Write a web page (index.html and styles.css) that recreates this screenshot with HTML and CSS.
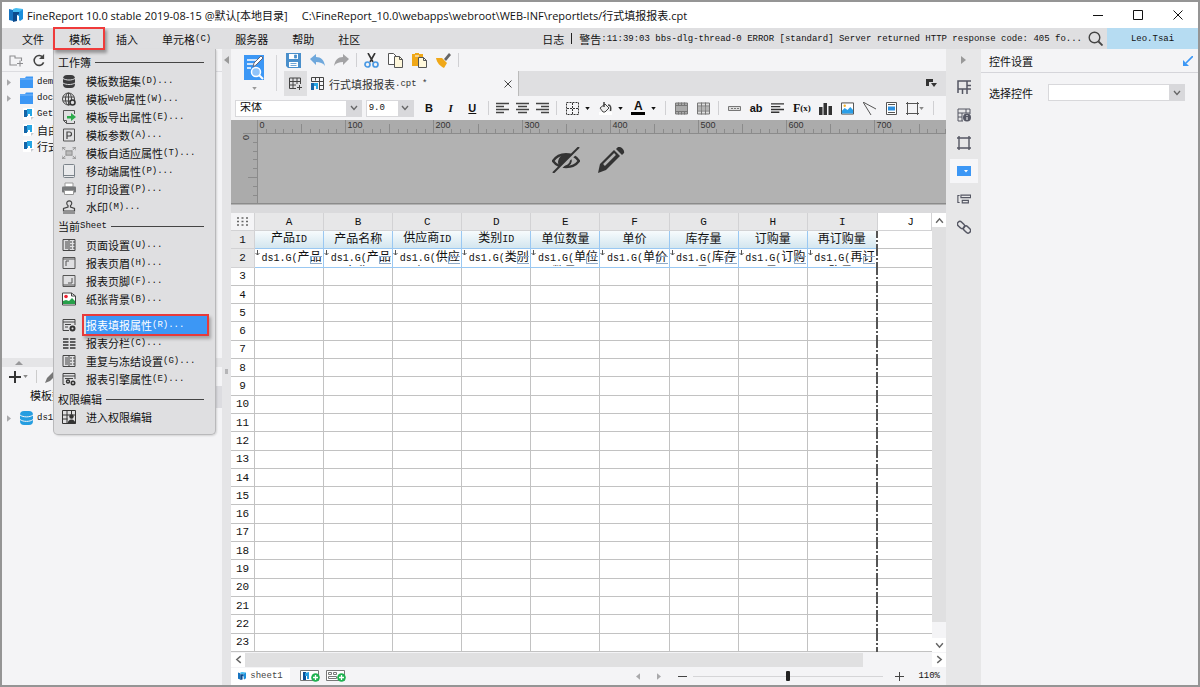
FILE: index.html
```html
<!DOCTYPE html>
<html lang="zh-CN">
<head>
<meta charset="utf-8">
<title>FineReport 10.0</title>
<link rel="stylesheet" href="styles.css">
</head>
<body>
<svg class="defs" aria-hidden="true">
  <symbol id="folder" viewBox="0 0 13 12"><path d="M0 2h5l1-1.500h7V12H0z" fill="#3c97f5"/><path d="M0 3h13" stroke="#7db9f8"/></symbol>
  <symbol id="file" viewBox="0 0 11 12"><path d="M0 0h11v9l-3 3H0z" fill="#fff"/><path d="M1 2h3v7H1z" fill="#1565a8"/><path d="M4 1l5 0v7H7V6H5v2H4z" fill="#25a5e4"/><path d="M8 12V9h3z" fill="#c5c9cf"/></symbol>
  <symbol id="tri" viewBox="0 0 5 8"><path d="M0 0l5 4-5 4z" fill="#a9a9ab"/></symbol>
  <symbol id="caret" viewBox="0 0 6 4"><path d="M0 0h6L3 4z" fill="currentColor"/></symbol>
  <symbol id="chev" viewBox="0 0 8 6"><path d="M1 1l3 3.500L7 1" fill="none" stroke="#666" stroke-width="1.300"/></symbol>
  <symbol id="pageset" viewBox="0 0 14 14"><path d="M1 1.500h12v11H1zM7 1v12" fill="none" stroke="#444"/><path d="M3 4h3M3 6h3M3 8h3M3 10h3M8 4h2M8 7h2M8 10h2M11 4h2M11 7h2M11 10h2" stroke="#444"/></symbol>
  <symbol id="logo" viewBox="0 0 14 14"><path d="M0 1l4 1v11l-4-1z" fill="#1673c0"/><path d="M4 1l3-1 7 1-3 3H4z" fill="#46bdf2"/><path d="M4 4h6v3H8v6l-4 1z" fill="#0c4a8c"/><path d="M10 4l4-3v10l-3 2-1-1V8l-2-1 2-1z" fill="#1b8fdc"/></symbol>
</svg>
<div class="window">
  <header class="titlebar">
    <svg class="applogo"><use href="#logo"/></svg>
    <span>FineReport 10.0 stable 2019-08-15 @默认[本地目录]</span>
    <span class="path">C:\FineReport_10.0\webapps\webroot\WEB-INF\reportlets/行式填报报表.cpt</span>
    <div class="winbtns">
      <button aria-label="最小化"><svg viewBox="0 0 10 10"><path d="M0 5.500h10" stroke="#111"/></svg></button>
      <button aria-label="最大化"><svg viewBox="0 0 10 10"><path d="M.5.500h9v9h-9z" fill="none" stroke="#111"/></svg></button>
      <button aria-label="关闭"><svg viewBox="0 0 10 10"><path d="M.5.500l9 9M9.500.500l-9 9" stroke="#111"/></svg></button>
    </div>
  </header>

  <nav class="menubar">
    <button>文件</button>
    <button class="current">模板</button>
    <button>插入</button>
    <button>单元格<span class="l">(C)</span></button>
    <button>服务器</button>
    <button>帮助</button>
    <button>社区</button>
    <div class="log">日志<i></i>警告<span class="l">:11:39:03 bbs-dlg-thread-0 ERROR [standard] Server returned HTTP response code: 405 fo...</span></div>
    <button class="search" aria-label="搜索"><svg viewBox="0 0 15 15"><circle cx="6.500" cy="6.500" r="5.300" fill="none" stroke="#444" stroke-width="1.400"/><path d="M10.500 10.500l4 4" stroke="#444" stroke-width="1.800"/></svg></button>
    <button class="user l">Leo.Tsai</button>
  </nav>

  <div class="workspace">
    <aside class="left">
      <div class="lefttools">
        <svg viewBox="0 0 14 12"><path d="M8 10.500H1v-9h5v2h6.500v3M11 6v6M8 9h6" fill="none" stroke="#8d8d90" stroke-width="1.100"/></svg>
        <svg viewBox="0 0 14 14"><path d="M11.500 4A5.300 5.300 0 1 0 12 9" fill="none" stroke="#444" stroke-width="1.700"/><path d="M12.500 0v5.500H7z" fill="#444"/></svg>
      </div>
      <ul class="tree">
        <li><svg class="tri"><use href="#tri"/></svg><svg class="fold"><use href="#folder"/></svg><span class="l">dem</span></li>
        <li><svg class="tri"><use href="#tri"/></svg><svg class="fold"><use href="#folder"/></svg><span class="l">doc</span></li>
        <li><svg class="tri"></svg><svg class="file"><use href="#file"/></svg><span class="l">Get</span></li>
        <li><svg class="tri"></svg><svg class="file"><use href="#file"/></svg>自由</li>
        <li><svg class="tri"></svg><svg class="file"><use href="#file"/></svg>行式</li>
      </ul>
      <div class="hsplit"><svg viewBox="0 0 8 4"><path d="M0 4h8L4 0z" fill="#98989a"/></svg></div>
      <div class="dstools">
        <svg class="plus" viewBox="0 0 12 12"><path d="M6 0v12M0 6h12" stroke="#333" stroke-width="2"/></svg><svg class="mini"><use href="#caret"/></svg><i></i>
        <svg class="pen" viewBox="0 0 12 12"><path d="M0 12l2-5 7-7 3 3-7 7z" fill="#777"/></svg>
      </div>
      <div class="dstab">模板数</div>
      <ul class="tree ds"><li><svg class="tri"><use href="#tri"/></svg><svg class="db" viewBox="0 0 13 14"><rect width="13" height="14" rx="4" fill="#259de0"/><path d="M0 4c3 2.500 10 2.500 13 0M0 8.500c3 2.500 10 2.500 13 0" fill="none" stroke="#f4f4f6"/></svg><span class="l">ds1</span></li></ul>

      <div class="dropdown">
        <h3>工作簿</h3>
        <ul>
          <li><svg viewBox="0 0 14 14"><rect x="1" y="1" width="12" height="13" rx="4" fill="#3c3c3e"/><path d="M1 4.500c3 2 9 2 12 0M1 9c3 2 9 2 12 0" fill="none" stroke="#dfdfe1"/></svg>模板数据集<span class="l">(D)...</span></li>
          <li><svg viewBox="0 0 14 14"><g fill="none" stroke="#444"><circle cx="6.500" cy="7" r="6"/><ellipse cx="6.500" cy="7" rx="3" ry="6"/><path d="M1 5h11M1 9h8M6.500 1v12"/></g><circle cx="10.500" cy="10.500" r="2.500" fill="#dfdfe1" stroke="#333" stroke-width="1.600"/></svg>模板<span class="l">Web</span>属性<span class="l">(W)...</span></li>
          <li><svg viewBox="0 0 14 14"><path d="M12.500 4V.500h-11v10l3 3h8V11M1.500 10.500h3v3" fill="none" stroke="#555"/><path d="M5 6h4V3l5 4-5 4V8.500H5z" fill="#2cab4b"/></svg>模板导出属性<span class="l">(E)...</span></li>
          <li><svg viewBox="0 0 14 14"><path d="M1.500 1h11v12h-11z" fill="none" stroke="#555"/><path d="M5 11V4h2.500a2 2 0 0 1 0 4H5" fill="none" stroke="#444" stroke-width="1.200"/></svg>模板参数<span class="l">(A)...</span></li>
          <li><svg viewBox="0 0 16 14"><path d="M4.500 4.500h7v5h-7z" fill="#bbb" stroke="#888"/><path d="M1 1l3 3M15 1l-3 3M1 13l3-3M15 13l-3-3M0 4V1h4M12 1h4v3M0 10v3h4M12 13h4v-3" fill="none" stroke="#888"/></svg>模板自适应属性<span class="l">(T)...</span></li>
          <li><svg viewBox="0 0 14 14"><rect x="1.500" y=".5" width="11" height="13" rx="1" fill="#e9eaec" stroke="#7b838a"/><path d="M2 11.500h10" stroke="#7b838a"/></svg>移动端属性<span class="l">(P)...</span></li>
          <li><svg viewBox="0 0 14 14"><path d="M3 1h8v4H3z" fill="#fff" stroke="#999"/><rect y="4.500" width="14" height="6" rx="1" fill="#77797b"/><path d="M2.500 8.500h9v4h-9z" fill="#fff" stroke="#999"/></svg>打印设置<span class="l">(P)...</span></li>
          <li><svg viewBox="0 0 14 14"><path d="M6 7V5.500a2.500 2.500 0 1 1 2.500 0V7l4 1.500V11H1.500V8.500zM1 13h12" fill="none" stroke="#444" stroke-width="1.200"/></svg>水印<span class="l">(M)...</span></li>
        </ul>
        <h3>当前<span class="l">Sheet</span></h3>
        <ul>
          <li><svg><use href="#pageset"/></svg>页面设置<span class="l">(U)...</span></li>
          <li><svg viewBox="0 0 14 14"><path d="M1 1.500h12v11H1z" fill="none" stroke="#555"/><path d="M4 10V5h3M1 3h12" fill="none" stroke="#555"/></svg>报表页眉<span class="l">(H)...</span></li>
          <li><svg viewBox="0 0 14 14"><path d="M1 1.500h12v11H1z" fill="none" stroke="#555"/><path d="M10 4v5H6M1 11h12" fill="none" stroke="#555"/></svg>报表页脚<span class="l">(F)...</span></li>
          <li><svg viewBox="0 0 14 14"><path d="M.5 1h9l4 3v9H.5z" fill="#fff" stroke="#444"/><circle cx="4" cy="4.500" r="1.800" fill="#e23"/><path d="M1 12V9l3-1 3 1 3-3 3 3v3z" fill="#26a04a"/><path d="M9.500 1v3h4" fill="none" stroke="#444"/></svg>纸张背景<span class="l">(B)...</span></li>
        </ul>
        <hr>
        <ul class="tight">
          <li class="picked"><svg viewBox="0 0 14 14"><path d="M1 12.500V1.500h12V7M1 4h12M1 12.500h6M3 6.500h6M3 9h3" fill="none" stroke="#444"/><circle cx="10.500" cy="10.500" r="2" fill="none" stroke="#333" stroke-width="2"/></svg><b>报表填报属性<span class="l">(R)...</span></b></li>
          <li><svg viewBox="0 0 14 14"><path d="M1 3h5.500M1 6h5.500M1 9h5.500M1 12h5.500M8 3h5.500M8 6h5.500M8 9h5.500M8 12h5.500" stroke="#333" stroke-width="1.600"/></svg>报表分栏<span class="l">(C)...</span></li>
          <li><svg><use href="#pageset"/></svg>重复与冻结设置<span class="l">(G)...</span></li>
          <li><svg viewBox="0 0 14 14"><path d="M1 12.500V1.500h12V7M1 4h12M3 6.500h8M1 12.500h2" fill="none" stroke="#444"/><circle cx="6" cy="9.500" r="1.500" fill="none" stroke="#333" stroke-width="1.400"/><circle cx="11" cy="11" r="1.700" fill="none" stroke="#333" stroke-width="1.600"/></svg>报表引擎属性<span class="l">(E)...</span></li>
        </ul>
        <h3>权限编辑</h3>
        <ul class="tight"><li><svg viewBox="0 0 14 14"><path d="M.5.500h13v13H.5zM.5 5h13M.5 9h5M5 .5v13M9.500.500v4" fill="none" stroke="#333"/><circle cx="9.500" cy="6.500" r="2.200" fill="#333"/><path d="M5.500 14c0-6 8-6 8 0z" fill="#333"/></svg>进入权限编辑</li></ul>
      </div>
    </aside>
    <div class="vsplit"><svg viewBox="0 0 5 8"><path d="M5 0v8L0 4z" fill="#999"/></svg><i></i></div>

    <main class="center">
      <div class="top">
        <button class="big" aria-label="模板预览"><svg viewBox="0 0 20 25"><path d="M0 0h20v25H0z" fill="#3c97f5"/><path d="M3 5h10M3 9h7M3 13h4" stroke="#fff" stroke-width="1.500"/><path d="M9 12l1-4 7-7 2 2-7 7z" fill="#fff" stroke="#667"/><circle cx="12" cy="17" r="4.500" fill="#8fc3fa" stroke="#fff" stroke-width="1.500"/><path d="M15 20l4 4" stroke="#fff" stroke-width="2"/></svg><svg class="mini"><use href="#caret"/></svg></button>
        <div class="topright">
          <div class="tools">
            <button aria-label="保存"><svg viewBox="0 0 15 15"><path d="M0 0h15v15H2l-2-2z" fill="#4a8fcb"/><path d="M3 1h9v5H3zM3 9h9v5H3z" fill="#fff"/><path d="M8.500 2h2v3h-2zM4.500 10.500h6M4.500 12.500h6" fill="#4a8fcb" stroke="#4a8fcb" stroke-width=".8"/></svg></button>
            <button aria-label="撤销"><svg viewBox="0 0 15 15"><path d="M0 6l6-5v3c5 0 8 3 9 9-2-3-5-4-9-4v3z" fill="#6fa8dc"/></svg></button>
            <button aria-label="重做"><svg viewBox="0 0 15 15"><path d="M15 6L9 1v3c-5 0-8 3-9 9 2-3 5-4 9-4v3z" fill="#a3a3a5"/></svg></button>
            <i></i>
            <button aria-label="剪切"><svg viewBox="0 0 15 15"><path d="M4 0l5 9M11 0L6 9" stroke="#333" stroke-width="1.600"/><circle cx="3.500" cy="11.500" r="2.500" fill="none" stroke="#4b9ae4" stroke-width="1.700"/><circle cx="11.500" cy="11.500" r="2.500" fill="none" stroke="#4b9ae4" stroke-width="1.700"/></svg></button>
            <button aria-label="复制"><svg viewBox="0 0 15 15"><path d="M.5.500h5l3 3v8h-8z" fill="#fff" stroke="#555"/><path d="M6.500 3.500h5l3 3v8h-8z" fill="#fff8dc" stroke="#555"/><path d="M11.500 3.500v3h3" fill="none" stroke="#555"/></svg></button>
            <button aria-label="粘贴"><svg viewBox="0 0 15 15"><path d="M0 1h3V0h4v1h4v12H0z" fill="#f0a818"/><path d="M3 3h4" stroke="#fff"/><path d="M6.500 4.500h5l3 3v7h-8z" fill="#fff8dc" stroke="#555"/><path d="M11.500 4.500v3h3" fill="none" stroke="#555"/></svg></button>
            <button aria-label="格式刷"><svg viewBox="0 0 15 15"><path d="M8 6l5-6 2 2-5 6z" fill="#666"/><path d="M0 5l6 0 5 5-3 5c-4-2-7-5-8-10z" fill="#f0a818"/></svg></button>
            <i></i>
          </div>
          <div class="tabs">
            <button class="newtab" aria-label="新建"><svg viewBox="0 0 13 13"><path d="M.5 1h11v6M.5 1v10.500H7M.5 4.500h11M.5 8H7M4 1v10.500M8 1v6M10.500 8v5M8 10.500h5" fill="none" stroke="#444"/></svg></button>
            <div class="tab"><svg viewBox="0 0 13 13"><path d="M.5.500h12v12H8M.5.500v4M.5 4.500h12M4.500.500v3M8.500.500v12M8 8.500h4.500" fill="none" stroke="#444"/><path d="M0 6h3v7H0z" fill="#1565a8"/><path d="M3 6h4v6H5v-3H3z" fill="#25a5e4"/></svg>行式填报报表<span class="l">.cpt *</span><button aria-label="关闭"><svg viewBox="0 0 8 8"><path d="M.5.500l7 7M7.500.500l-7 7" stroke="#444"/></svg></button></div>
            <svg class="tablist" viewBox="0 0 11 9"><path d="M0 0h7v3H3v4H0z" fill="#333"/><path d="M5 4h6L8 8z" fill="#333"/></svg>
          </div>
        </div>
      </div>
      <div class="format">
        <label class="sel font"><select aria-label="字体"><option>宋体</option></select><span><svg><use href="#chev"/></svg></span></label>
        <label class="sel size"><select class="l" aria-label="字号"><option>9.0</option></select><span><svg><use href="#chev"/></svg></span></label>
        <button class="b">B</button><button class="b it">I</button><button class="b un">U</button><i></i>
        <button class="al" aria-label="左对齐"><svg viewBox="0 0 13 13"><path d="M0 1.500h13M0 4.500h8M0 7.500h13M0 10.500h8" stroke="#444" stroke-width="1.300"/></svg></button>
        <button class="al" aria-label="居中"><svg viewBox="0 0 13 13"><path d="M0 1.500h13M2 4.500h9M0 7.500h13M2 10.500h9" stroke="#444" stroke-width="1.300"/></svg></button>
        <button class="al" aria-label="右对齐"><svg viewBox="0 0 13 13"><path d="M0 1.500h13M5 4.500h8M0 7.500h13M5 10.500h8" stroke="#444" stroke-width="1.300"/></svg></button><i></i>
        <button class="wide" aria-label="边框"><svg viewBox="0 0 13 13"><path d="M.5.500h12v12H.5zM6.500 1v12M1 6.500h12" fill="none" stroke="#333" stroke-dasharray="2 1"/></svg><svg class="mini"><use href="#caret"/></svg></button>
        <button class="wide" aria-label="填充"><svg viewBox="0 0 13 13"><path d="M0 10h13v3H0z" fill="#fff"/><path d="M1 6l5-4 4 4-4 4H4z" fill="#eee" stroke="#444"/><path d="M5 5V0M9 3c3 0 3 3 2.500 6" fill="none" stroke="#444" stroke-width="1.500"/></svg><svg class="mini"><use href="#caret"/></svg></button>
        <button class="wide color" aria-label="字体颜色"><span>A</span><svg class="mini"><use href="#caret"/></svg></button><i></i>
        <button aria-label="合并"><svg viewBox="0 0 13 12"><path d="M.5.500h12v11H.5zM0 3h13M0 9h13M3.500 0v3M6.500 0v3M9.500 0v3M3.500 9v3M6.500 9v3M9.500 9v3" fill="#aaa" stroke="#777"/></svg></button>
        <button aria-label="取消合并"><svg viewBox="0 0 13 12"><path d="M.5.500h12v11H.5z" fill="#ddd" stroke="#777"/><path d="M0 3.500h13M0 8.500h13M4.500 0v12M8.500 0v12" stroke="#777"/><path d="M1 4h11v4H1z" fill="#999" opacity=".6"/></svg></button><i></i>
        <button aria-label="控件"><svg viewBox="0 0 13 12"><path d="M.5 4h12v4H.5z" fill="#ddd" stroke="#777"/><path d="M3 6h2M6 6h2M9 6h2" stroke="#777"/></svg></button>
        <button class="ab">ab</button>
        <button aria-label="富文本"><svg viewBox="0 0 14 13"><path d="M0 1.500h14M0 4.500h10M0 7.500h14M0 10.500h9" stroke="#333" stroke-width="1.500"/></svg></button>
        <button class="fx">F<small>(x)</small></button>
        <button aria-label="图表"><svg viewBox="0 0 13 13"><path d="M0 5h3.500v8H0zM4.500 1H8v12H4.500zM9.500 4H13v9H9.500z" fill="#333"/></svg></button>
        <button aria-label="图片"><svg viewBox="0 0 14 13"><path d="M.5.500h13v12H.5z" fill="#fff" stroke="#444"/><path d="M1 9l3-3 3 2 3-3 3 3v4H1z" fill="#2b9fe8"/><circle cx="4" cy="3.500" r="1.300" fill="#f4b32c"/></svg></button>
        <button aria-label="斜线"><svg viewBox="0 0 13 13"><path d="M0 0l13 7M0 0l8 13" stroke="#555" fill="none"/></svg></button>
        <button aria-label="子报表"><svg viewBox="0 0 11 13"><path d="M.5.500h10v12H.5z" fill="#fff" stroke="#555"/><path d="M2 2.500h7M2 10.500h7" stroke="#555"/><path d="M2 4.500h7v4H2z" fill="#2b8fe0"/></svg></button>
        <button class="wide" aria-label="悬浮元素"><svg viewBox="0 0 13 13"><path d="M1.500 0v13M11.500 0v13M0 1.500h13M0 11.500h13" stroke="#555"/></svg><svg class="mini grey"><use href="#caret"/></svg></button><i></i>
      </div>

      <div class="canvas">
        <svg class="ruler" id="ruler" aria-hidden="true"></svg>
        <div class="overlaytools">
          <svg viewBox="0 0 28 26"><path d="M1 14C7 5 21 5 27 14 21 22 7 22 1 14z" fill="none" stroke="#333" stroke-width="2.400"/><path d="M6 15c1-6 5-9 13-8L9 20c-2-1-3-3-3-5z" fill="#333"/><path d="M18 11c2 4 0 7-5 9" fill="none" stroke="#333" stroke-width="2"/><path d="M28 2L3 26" stroke="#b2b2b2" stroke-width="3"/><path d="M27 0L1 26" stroke="#333" stroke-width="2"/></svg>
          <svg viewBox="0 0 26 26"><path d="M0 26l2-9L16 3l6 6L8 23z" fill="#333"/><path d="M6 18L17 7" stroke="#b2b2b2" stroke-width="2.500"/><path d="M18 2l2-2c3-1 7 3 6 6l-2 2z" fill="#333"/></svg>
        </div>
      </div>

      <div class="sheet">
        <table>
          <colgroup><col class="num"><col span="9"><col class="last"></colgroup>
          <thead><tr><th><svg viewBox="0 0 11 9"><path d="M0 1h11M0 4.500h11M0 8h11" stroke="#666" stroke-width="1.500" stroke-dasharray="2 2.500"/></svg></th><th>A</th><th>B</th><th>C</th><th>D</th><th>E</th><th>F</th><th>G</th><th>H</th><th>I</th><th>J</th></tr></thead>
          <tbody id="rows">
            <tr class="names"><th>1</th><td>产品<span>ID</span></td><td>产品名称</td><td>供应商<span>ID</span></td><td>类别<span>ID</span></td><td>单位数量</td><td>单价</td><td>库存量</td><td>订购量</td><td>再订购量</td><td></td></tr>
          </tbody>
        </table>
        <div class="vscroll"><button aria-label="上"><svg class="up"><use href="#chev"/></svg></button><div class="track"><div class="thumb"></div></div><button aria-label="下"><svg><use href="#chev"/></svg></button></div>
      </div>
      <div class="hscroll"><button aria-label="左"><svg class="lt"><use href="#chev"/></svg></button><div class="track"><div class="thumb"></div></div><button aria-label="右"><svg class="rt"><use href="#chev"/></svg></button></div>
      <footer class="bottom">
        <button class="sheettab l"><svg><use href="#logo"/></svg>sheet1</button>
        <button class="add" aria-label="新增sheet"><svg viewBox="0 0 20 12"><path d="M.5.500h18v10H.5z" fill="#fff" stroke="#777"/><path d="M3 2h3v8H3z" fill="#0b4f96"/><path d="M5 3l4-1v7H7V6H5z" fill="#259de0"/><circle cx="15.500" cy="7.500" r="4.300" fill="#1fb250"/><path d="M15.500 5v5M13 7.500h5" stroke="#fff" stroke-width="1.300"/></svg></button>
        <button class="add" aria-label="新增聚合块"><svg viewBox="0 0 20 12"><path d="M.5.500h18v10H.5z" fill="#fff" stroke="#777"/><path d="M2.500 2.500h3v2h-3zM7.500 2.500h3v2h-3zM2.500 6.500h8v2h-8z" fill="none" stroke="#777"/><circle cx="15.500" cy="7.500" r="4.300" fill="#1fb250"/><path d="M15.500 5v5M13 7.500h5" stroke="#fff" stroke-width="1.300"/></svg></button>
        <div class="zoom">
          <svg class="nav flip"><use href="#tri"/></svg><svg class="nav"><use href="#tri"/></svg>
          <button aria-label="缩小"><svg viewBox="0 0 9 9"><path d="M0 4.500h9" stroke="#444"/></svg></button>
          <input type="range" min="0" max="100" value="50" aria-label="缩放">
          <button aria-label="放大"><svg viewBox="0 0 9 9"><path d="M0 4.500h9M4.500 0v9" stroke="#444"/></svg></button>
          <span class="l">110%</span>
        </div>
      </footer>
    </main>

    <div class="strip">
      <svg class="fold" viewBox="0 0 5 8"><path d="M0 0l5 4-5 4z" fill="#999"/></svg>
      <button aria-label="单元格元素"><svg viewBox="0 0 14 14"><path d="M1 13V1h13M1 9h9M10 1v13M5.500 9v5M10 5.500h4M10 9h4" fill="none" stroke="#555763" stroke-width="1.500"/></svg></button>
      <button aria-label="单元格属性"><svg viewBox="0 0 14 14"><path d="M1 1h12v5M1 1v12h5M1 5h12M1 9h4M5 5v8M9 1v4" fill="none" stroke="#555763"/><circle cx="10" cy="9.500" r="4" fill="#555763"/><path d="M10 7v1M10 9v3" stroke="#fff"/></svg></button>
      <button aria-label="悬浮元素"><svg viewBox="0 0 14 14"><path d="M2 0v14M12 0v14M0 2h14M0 12h14" stroke="#555763" stroke-width="1.400"/></svg></button>
      <button class="on" aria-label="控件设置"><svg viewBox="0 0 14 14"><path d="M0 2h14v10H0z" fill="#3c97f5"/><path d="M7 6h4L9 8.500z" fill="#fff"/></svg></button>
      <button aria-label="条件属性"><svg viewBox="0 0 16 14"><path d="M3 3H1v8h2M4.500 2.500h11v3h-11zM6 8.500h7v3H6z" fill="none" stroke="#555763" stroke-width="1.300"/></svg></button>
      <button aria-label="超级链接"><svg viewBox="0 0 14 14"><g fill="none" stroke="#555763" stroke-width="1.500"><rect x="0" y="2.500" width="8" height="5" rx="2.500" transform="rotate(45 4 5)"/><rect x="6" y="7" width="8" height="5" rx="2.500" transform="rotate(45 10 9.500)"/></g></svg></button>
    </div>
    <aside class="panel">
      <h2>控件设置<svg viewBox="0 0 10 10"><path d="M10 0L3 7" stroke="#3c97f5" stroke-width="1.700"/><path d="M0 4v6h6z" fill="#3c97f5"/></svg></h2>
      <div class="field"><label for="ctl">选择控件</label><div class="sel"><select id="ctl"><option></option></select><span><svg><use href="#chev"/></svg></span></div></div>
    </aside>
  </div>
</div>
<script src="main.js"></script>
</body>
</html>
```
FILE: main.js
```js
const fields = [["产品", "ID)"], ["产品", "名称)"], ["供应", "商ID)"], ["类别", "ID)"], ["单位", "数量)"], ["单价", ")"], ["库存", "量)"], ["订购", "量)"], ["再订", "购量)"]];
const rows = document.getElementById("rows");
const arrow = '<svg class="arr" viewBox="0 0 5 6"><path d="M2.500 0v5M.5 3l2 2 2-2" fill="none" stroke="#555"/></svg>';

let html = '<tr class="data"><th>2</th>' + fields.map(([a, b]) =>
  `<td><div class="expr">${arrow}<span>ds1.G(</span>${a}<br>${b}<em></em></div></td>`).join("") + "<td></td></tr>";
for (let r = 3; r <= 23; r++) html += `<tr><th>${r}</th>${"<td></td>".repeat(10)}</tr>`;
rows.insertAdjacentHTML("beforeend", html);

// Horizontal ruler along the top, vertical ruler down the left side
const step = 8.82, x0 = 26;
let marks = '<rect width="100%" height="14" fill="#ababab"/><rect x="0" width="26" height="84" fill="#ababab"/>';
for (let i = 0; i < 79; i++) {
  const x = Math.round(x0 + i * step) + 0.5;
  const h = i % 10 === 0 ? 13 : i % 5 === 0 ? 9 : 4;
  marks += `<path d="M${x} 13v-${h}" stroke="#8b8b8b"/>`;
  if (i % 10 === 0) marks += `<text x="${x + 2}" y="8">${i * 10}</text>`;
}
for (let i = 1; i < 8; i++) {
  const y = Math.round(13 + i * step) + 0.5;
  marks += `<path d="M26 ${y}h-${i % 5 === 0 ? 9 : 4}" stroke="#8b8b8b"/>`;
}
marks += '<text transform="translate(18 20) rotate(-90)">0</text><path d="M12 13.500h1200M26.500 0v84M0 83.500h1200" stroke="#8b8b8b" fill="none"/>';
document.getElementById("ruler").innerHTML = marks;
```
FILE: styles.css
```css
* { box-sizing: border-box; }
body { margin: 0; font: 11px "Liberation Mono", "Noto Sans CJK SC", monospace; color: #111; overflow: hidden; }
button { border: 0; padding: 0; margin: 0; background: none; font: inherit; color: inherit; display: flex; align-items: center; justify-content: center; flex: none; }
ul { list-style: none; margin: 0; padding: 0; }
svg { display: block; flex: none; }
.defs { position: absolute; width: 0; height: 0; }
.l { font-size: 9px; }
.window { height: 100vh; display: flex; flex-direction: column; border: 2px solid #959595; background: #f4f4f6; }

.titlebar { height: 26px; flex: none; background: #fff; display: flex; align-items: center; padding-left: 7px; font: 11px "Open Sans", "Noto Sans CJK SC", sans-serif; white-space: nowrap; }
.applogo { width: 14px; height: 14px; margin-right: 4px; }
.path { margin-left: 14px; }
.winbtns { margin-left: auto; display: flex; }
.winbtns button { width: 40px; height: 26px; }
.winbtns svg { width: 10px; height: 10px; }

.menubar { height: 21px; flex: none; display: flex; background: #dfdfe1; white-space: nowrap; position: relative; }
.menubar button { height: 21px; padding: 0 12px; }
.menubar button:first-child { padding-left: 20px; }
.menubar .current { position: relative; width: 48px; }
.menubar .current::after { content: ""; position: absolute; z-index: 5; inset: -1px -1px -1px -3px; border: 2px solid #ef3b3b; box-shadow: 2px 3px 3px #0005; }
.log { margin-left: auto; display: flex; align-items: center; }
.log i { width: 1px; height: 11px; background: #222; margin: 0 7px; }
.menubar .search { padding: 0 4px 0 6px; }
.search svg { width: 15px; height: 15px; }
.menubar .user { width: 91px; background: #b6dcf2; }

.workspace { flex: 1; min-height: 0; display: flex; }
.left { width: 220px; flex: none; position: relative; display: flex; flex-direction: column; white-space: nowrap; }
.lefttools { height: 23px; display: flex; align-items: center; gap: 9px; padding-left: 7px; border-bottom: 1px solid #dcdce0; }
.lefttools svg { width: 14px; height: 13px; }
.tree { padding-top: 2px; flex: 1; }
.tree li { height: 16px; display: flex; align-items: center; padding-left: 5px; }
.tree .tri { width: 4px; height: 7px; margin-right: 9px; }
.tree .fold, .tree .db { width: 13px; height: 12px; margin-right: 4px; }
.tree .db { height: 14px; }
.tree .file { width: 11px; height: 12px; margin: 0 3px; }
.hsplit { height: 9px; background: #e5e5e7; padding: 3px 0 0 13px; }
.hsplit svg { width: 8px; height: 4px; }
.dstools { height: 19px; display: flex; align-items: center; padding-left: 7px; gap: 2px; color: #888; }
.plus, .pen { width: 12px; height: 12px; }
.dstools i { width: 1px; height: 13px; background: #ccc; margin: 0 6px; }
.mini { width: 5px; height: 3px; }
.dstab { height: 22px; background: linear-gradient(90deg, #f4f4f6 60px, #dcdce0 60px); padding-left: 28px; line-height: 22px; }
.tree.ds { flex: 0 0 277px; }

.dropdown { position: absolute; z-index: 3; left: 51px; top: 0; width: 163px; padding: 4px 0 8px; background: #dfdfe1; border: 1px solid #b9b9bb; border-top: 0; border-radius: 0 0 5px 5px; box-shadow: 1px 1px 2px #0002; }
.dropdown h3 { margin: 0 11px 0 4px; height: 18px; font: inherit; display: flex; align-items: center; }
.dropdown h3::after { content: ""; flex: 1; height: 1px; background: #444; margin-left: 4px; }
.dropdown ul { padding: 1px 0; }
.dropdown .tight { padding: 0 0 2px; }
.dropdown .tight:last-child { padding: 0; }
.dropdown li { height: 18px; display: flex; align-items: center; padding-left: 8px; }
.dropdown li svg { width: 14px; height: 14px; margin-right: 10px; }
.dropdown hr { height: 6px; margin: 0 12px 1px 28px; border: 0; border-bottom: 1px dotted #888; }
.picked b { font-weight: 400; color: #fff; background: #3c97f5; align-self: stretch; width: 121px; display: flex; align-items: center; position: relative; }
.picked b::after { content: ""; position: absolute; inset: -2px -2px -2px -4px; border: 2px solid #e83a3a; box-shadow: 2px 3px 3px #0004; }

.vsplit { width: 9px; flex: none; background: #e5e5e7; display: flex; flex-direction: column; align-items: center; padding-top: 7px; }
.vsplit svg { width: 5px; height: 8px; }
.vsplit i { width: 3px; height: 5px; background: #b5b5b7; margin-top: 305px; }

.center { flex: 1; min-width: 0; display: flex; flex-direction: column; }
.top { display: flex; height: 47px; flex: none; }
.big { width: 46px; flex-direction: column; gap: 7px; color: #999; position: relative; }
.big::after { content: ""; position: absolute; right: 0; top: 6px; width: 1px; height: 36px; background: #d5d5d8; }
.big svg:first-child { width: 20px; height: 25px; }
.topright { flex: 1; margin-left: 7px; }
.tools { height: 22px; display: flex; align-items: center; gap: 9px; padding-left: 2px; }
.tools svg { width: 15px; height: 15px; }
.tools i, .format i { width: 1px; height: 14px; background: #d0d0d3; }
.tools i { margin: 0 -2px; }
.tabs { height: 25px; background: #dfdfe1; display: flex; align-items: center; }
.newtab { width: 23px; height: 25px; }
.tabs svg { width: 13px; height: 13px; }
.tab { width: 212px; height: 25px; background: #f4f4f6; display: flex; align-items: center; padding: 0 6px 0 4px; border-right: 1px solid #bbb; color: #333; }
.tab > svg { margin-right: 5px; }
.tab button { margin-left: auto; }
.tab button svg { width: 8px; height: 8px; }
.tabs .tablist { width: 11px; height: 9px; margin: 0 9px 0 auto; }

.format { height: 24px; flex: none; display: flex; align-items: center; justify-content: space-between; padding: 0 12px 0 4px; }
.sel { display: flex; height: 17px; border: 1px solid #d8d8db; background: #fff; }
.sel select { appearance: none; border: 0; background: #fff; flex: 1; min-width: 0; padding: 0 4px; font-family: inherit; font-size: 11px; color: inherit; outline: 0; }
.sel select.l { font-size: 9px; padding: 0 2px; }
.sel span { width: 15px; background: #d8d8db; display: flex; align-items: center; justify-content: center; }
.sel svg { width: 8px; height: 6px; }
.font { width: 127px; margin-right: -5px; }
.size { width: 48px; }
.format svg { width: 13px; height: 13px; }
.format svg.mini { width: 5px; height: 3px; }
.format .sel svg { width: 8px; height: 6px; }
.wide { gap: 6px; }
.wide .grey { color: #888; margin-left: -6px; }
.al { margin: 0 -1px; }
.b { width: 13px; font: 700 11px "Liberation Sans", sans-serif; }
.it { font-family: "Liberation Serif", serif; font-style: italic; }
.un { text-decoration: underline; }
.color span { font: 700 12px/11px "Liberation Sans", sans-serif; width: 14px; border-bottom: 3px solid #000; }
.ab { font: 700 11px "Liberation Sans", sans-serif; }
.fx { font: 700 12px "Liberation Serif", serif; }
.fx small { font-size: 9px; }

.canvas { height: 85px; flex: none; background: #b2b2b2; position: relative; display: flex; justify-content: center; }
.ruler { position: absolute; inset: 0; width: 100%; height: 84px; }
.ruler text { font: 9px "Liberation Sans", sans-serif; fill: #333; }
.overlaytools { display: flex; gap: 17px; padding-top: 27px; position: relative; }
.overlaytools svg { width: 28px; height: 26px; }

.sheet { flex: 1; min-height: 0; display: flex; border-top: 8px solid #dadadc; background: #fff; }
table { flex: 1; height: 100%; min-width: 0; table-layout: fixed; border-collapse: separate; border-spacing: 0; }
tr { height: 18px; }
.num { width: 24px; }
.last { width: 54px; }
th, td { padding: 0; border: solid #c2c2c2; border-width: 0 1px 1px 0; font-weight: 400; text-align: center; line-height: 16px; overflow: hidden; white-space: nowrap; }
th { font-size: 11px; }
thead th, tbody tr:nth-child(-n+2) th { background: #e7e7e8; border-color: #d2d2d4; }
thead th:last-child { background: #fff; padding-left: 12px; }
thead th:first-child { background: #f4f4f6; }
thead svg { width: 11px; height: 9px; margin: auto; }
td { font-size: 12px; }
td span { font-size: 10px; }
.names td:not(:last-child) { background: linear-gradient(#f7fbfd, #d3e6ef); border-color: #9ac8f2; }
.data td { vertical-align: top; }
.data td:not(:last-child) { border-color: #9ac8f2; }
tbody td:nth-child(10) { border-right: 2px solid; border-image: repeating-linear-gradient(#555 0 7px, #fff 7px 9px, #555 9px 11px, #fff 11px 13px) 0 2 0 0; border-bottom: 0; box-shadow: inset 0 -1px #c2c2c2; }
tbody tr:nth-child(-n+2) td:nth-child(10) { box-shadow: inset 0 -1px #9ac8f2; }
tbody td:last-child { border-right: 0; }
.expr { position: relative; height: 17px; line-height: 14px; padding: 2px 0 0 5px; overflow: hidden; }
.arr { position: absolute; left: 0; top: 1px; width: 5px; height: 6px; }
.expr em { position: absolute; right: 1px; bottom: 2px; width: 12px; height: 8px; border: 1px solid #8fabc9; border-right: 0; }

.vscroll { width: 14px; flex: none; display: flex; flex-direction: column; background: #f4f4f6; }
.vscroll button, .hscroll button { width: 14px; height: 14px; background: #fff; }
.vscroll svg, .hscroll svg { width: 9px; height: 7px; }
.up { transform: rotate(180deg); }
.lt { transform: rotate(90deg); }
.rt { transform: rotate(-90deg); }
.track { flex: 1; min-height: 0; }
.thumb { background: #e0e0e1; }
.vscroll .thumb { height: 96%; }
.hscroll { height: 15px; flex: none; display: flex; align-items: center; }
.hscroll .thumb { width: 90%; height: 14px; }

.bottom { height: 18px; flex: none; display: flex; align-items: center; }
.sheettab { width: 59px; height: 17px; background: #fff; gap: 4px; color: #444; margin-right: 10px; }
.sheettab svg { width: 8px; height: 8px; }
.add { margin-right: 6px; }
.add svg { width: 20px; height: 12px; }
.zoom { margin-left: auto; display: flex; align-items: center; padding-right: 6px; }
.nav { width: 4px; height: 7px; margin-right: 17px; }
.flip { transform: scaleX(-1); }
.zoom button svg { width: 9px; height: 9px; }
.zoom input { appearance: none; width: 190px; height: 12px; margin: 0 12px 0 6px; background: linear-gradient(#d5d5d7, #d5d5d7) center / 100% 1px no-repeat; }
.zoom input::-webkit-slider-thumb { appearance: none; width: 4px; height: 10px; border-radius: 1px; background: #222; }
.zoom span { margin-left: 14px; }

.strip { width: 35px; flex: none; background: #e7e7e8; display: flex; flex-direction: column; align-items: center; }
.strip .fold { width: 5px; height: 8px; margin: 7px 0 11px; }
.strip button { width: 28px; height: 24px; margin-bottom: 4px; }
.strip button svg { width: 14px; height: 14px; }
.strip .on { background: #f6f6f8; }
.panel { width: 217px; flex: none; }
.panel h2 { margin: 0; height: 24px; font: inherit; display: flex; align-items: center; justify-content: space-between; padding: 0 5px 0 8px; border-bottom: 1px solid #d5d5da; }
.panel h2 svg { width: 10px; height: 10px; }
.field { display: flex; align-items: center; padding: 11px 13px 0 8px; gap: 15px; }
.field .sel { flex: 1; }
```
